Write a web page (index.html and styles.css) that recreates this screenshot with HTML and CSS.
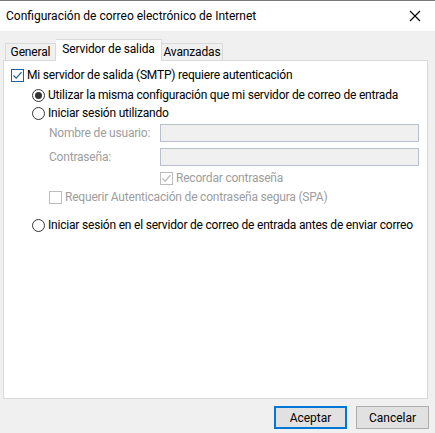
FILE: index.html
```html
<!DOCTYPE html>
<html lang="es">
<head>
<meta charset="utf-8">
<title>Configuración de correo electrónico de Internet</title>
<link rel="stylesheet" href="styles.css">
</head>
<body>
<div class="window">
  <div class="titlebar">
    <span class="title">Configuración de correo electrónico de Internet</span>
    <svg class="close" width="12" height="12" viewBox="0 0 12 12"><path d="M1 1 L11 11 M11 1 L1 11" stroke="#000" stroke-width="1.1" fill="none"/></svg>
  </div>
  <div class="tabs">
    <div class="tab t1">General</div>
    <div class="tab t2 active">Servidor de salida</div>
    <div class="tab t3">Avanzadas</div>
  </div>
  <div class="panel">
    <div class="row r1">
      <span class="check checked"><svg width="11" height="11" viewBox="0 0 11 11"><path d="M1.5 5.5 L4.2 8.2 L9.5 2.2" stroke="#1b5f9e" stroke-width="1.2" fill="none"/></svg></span>
      <span class="lbl">Mi servidor de salida (SMTP) requiere autenticación</span>
    </div>
    <div class="row r2 indent">
      <span class="radio on"></span>
      <span class="lbl">Utilizar la misma configuración que mi servidor de correo de entrada</span>
    </div>
    <div class="row r3 indent">
      <span class="radio"></span>
      <span class="lbl">Iniciar sesión utilizando</span>
    </div>
    <div class="field f1">
      <span class="flabel">Nombre de usuario:</span>
      <span class="input"></span>
    </div>
    <div class="field f2">
      <span class="flabel">Contraseña:</span>
      <span class="input"></span>
    </div>
    <div class="row r4">
      <span class="check dis"><svg width="11" height="11" viewBox="0 0 11 11"><path d="M1.5 5.5 L4.2 8.2 L9.5 2.2" stroke="#b5b5b5" stroke-width="1.2" fill="none"/></svg></span>
      <span class="lbl dim">Recordar contraseña</span>
    </div>
    <div class="row r5">
      <span class="check dis"></span>
      <span class="lbl dim">Requerir Autenticación de contraseña segura (SPA)</span>
    </div>
    <div class="row r6 indent">
      <span class="radio"></span>
      <span class="lbl">Iniciar sesión en el servidor de correo de entrada antes de enviar correo</span>
    </div>
  </div>
  <div class="buttons">
    <button class="btn default">Aceptar</button>
    <button class="btn">Cancelar</button>
  </div>
</div>
</body>
</html>
```
FILE: styles.css
```css
html, body {
  margin: 0;
  padding: 0;
}
body {
  width: 435px;
  height: 433px;
  background: #f0f0f0;
  font-family: Roboto, "Noto Sans", sans-serif;
  font-size: 12px;
  color: #000;
  overflow: hidden;
}
.window {
  border-top: 1px solid #7a7a7a;
  height: 432px;
  display: flex;
  flex-direction: column;
}
.titlebar {
  height: 30px;
  background: #fff;
  display: flex;
  align-items: center;
  justify-content: space-between;
  padding: 0 14px 0 6px;
}
.title {
  font-size: 12px;
}
.close {
  display: block;
}
.tabs {
  display: flex;
  align-items: flex-end;
  margin-top: 8px;
  padding-left: 5px;
  height: 21px;
  position: relative;
  z-index: 1;
  letter-spacing: -0.15px;
}
.tab {
  height: 17px;
  box-sizing: border-box;
  border: 1px solid #d9d9d9;
  border-bottom: none;
  background: #f0f0f0;
  line-height: 17px;
  text-align: center;
  white-space: nowrap;
}
.t1 { width: 51px; }
.t2 { width: 106px; }
.t3 { width: 61px; border-left: none; }
.tab.active {
  height: 22px;
  background: #fff;
  margin-bottom: -1px;
  line-height: 18px;
  border-left: none;
}
.panel {
  margin: 0 7px 0 3px;
  height: 339px;
  box-sizing: border-box;
  border: 1px solid #d9d9d9;
  background: #fff;
  padding: 7px 0 0 7px;
  display: flex;
  flex-direction: column;
  letter-spacing: -0.2px;
}
.row {
  display: flex;
  align-items: center;
  height: 14px;
}
.indent {
  padding-left: 21px;
}
.r2 { margin-top: 6px; }
.r3 { margin-top: 4px; }
.r4 { margin-top: 5px; padding-left: 149px; }
.r5 { margin-top: 5px; padding-left: 38px; }
.r6 { margin-top: 14px; }
.lbl {
  margin-left: 3px;
  white-space: nowrap;
}
.dim {
  color: #9d9d9d;
}
.check {
  width: 13px;
  height: 13px;
  box-sizing: border-box;
  border: 1px solid #333;
  background: #fff;
  display: flex;
  align-items: center;
  justify-content: center;
  flex: none;
}
.check.checked {
  border-color: #1b5f9e;
}
.check.dis {
  border-color: #bcbcbc;
}
.radio {
  width: 13px;
  height: 13px;
  box-sizing: border-box;
  border: 1px solid #333;
  border-radius: 50%;
  background: #fff;
  display: flex;
  align-items: center;
  justify-content: center;
  flex: none;
}
.radio.on::after {
  content: "";
  width: 7px;
  height: 7px;
  border-radius: 50%;
  background: #333;
}
.field {
  display: flex;
  align-items: center;
  padding-left: 38px;
  height: 18px;
}
.f1 { margin-top: 4px; }
.f2 { margin-top: 6px; }
.flabel {
  width: 111px;
  flex: none;
  color: #9d9d9d;
  white-space: nowrap;
}
.input {
  width: 259px;
  height: 18px;
  box-sizing: border-box;
  border: 1px solid #b7c0cc;
  background: #f0f0f0;
}
.buttons {
  display: flex;
  justify-content: flex-end;
  gap: 9px;
  padding-right: 6px;
  margin-top: 7px;
}
.btn {
  width: 73px;
  height: 23px;
  box-sizing: border-box;
  border: 1px solid #adadad;
  background: #e1e1e1;
  font-family: inherit;
  font-size: 12px;
  color: #000;
  padding: 0;
}
.btn.default {
  border: 2px solid #0078d7;
}
```
